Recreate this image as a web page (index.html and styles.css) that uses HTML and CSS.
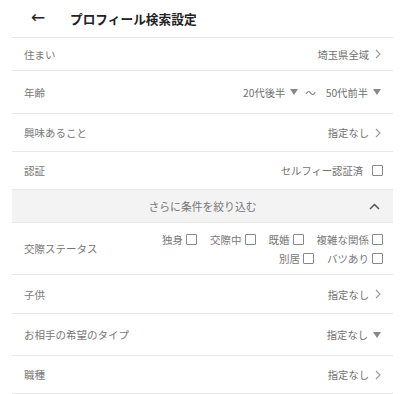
FILE: index.html
```html
<!DOCTYPE html>
<html lang="ja">
<head>
  <meta charset="UTF-8" />
  <meta name="viewport" content="width=device-width, initial-scale=1.0"/>
  <title>プロフィール検索設定</title>
  <link rel="stylesheet" href="styles.css">
</head>
<body>
  <div class="header">
    <span class="back">&#x2190;</span>
    <h1>プロフィール検索設定</h1>
  </div>

  <div class="list">
    <div class="row row-short">
      <span class="label">住まい</span>
      <span class="value">埼玉県全域
        <svg class="chev" width="6" height="10" viewBox="0 0 6 10"><polyline points="1,1 5,5 1,9" /></svg>
      </span>
    </div>

    <div class="row row-tall">
      <span class="label">年齢</span>
      <span class="value">
        20代後半 <span class="tri"></span>
        <span class="tilde">〜</span>
        50代前半 <span class="tri"></span>
      </span>
    </div>

    <div class="row">
      <span class="label">興味あること</span>
      <span class="value">指定なし
        <svg class="chev" width="6" height="10" viewBox="0 0 6 10"><polyline points="1,1 5,5 1,9" /></svg>
      </span>
    </div>

    <div class="row">
      <span class="label">認証</span>
      <span class="value">セルフィー認証済 <span class="check check-wide"></span></span>
    </div>

    <div class="more">
      <span>さらに条件を絞り込む</span>
      <svg class="up" width="11" height="7" viewBox="0 0 11 7"><polyline points="1,6 5.5,1.5 10,6" /></svg>
    </div>

    <div class="row row-status">
      <span class="label">交際ステータス</span>
      <div class="options">
        <div class="opt-line">
          <span class="opt">独身<span class="check"></span></span>
          <span class="opt">交際中<span class="check"></span></span>
          <span class="opt">既婚<span class="check"></span></span>
          <span class="opt">複雑な関係<span class="check"></span></span>
        </div>
        <div class="opt-line">
          <span class="opt">別居<span class="check"></span></span>
          <span class="opt">バツあり<span class="check"></span></span>
        </div>
      </div>
    </div>

    <div class="row row-child">
      <span class="label">子供</span>
      <span class="value">指定なし
        <svg class="chev" width="6" height="10" viewBox="0 0 6 10"><polyline points="1,1 5,5 1,9" /></svg>
      </span>
    </div>

    <div class="row row-select">
      <span class="label">お相手の希望のタイプ</span>
      <span class="value">指定なし <span class="tri"></span></span>
    </div>

    <div class="row">
      <span class="label">職種</span>
      <span class="value">指定なし
        <svg class="chev" width="6" height="10" viewBox="0 0 6 10"><polyline points="1,1 5,5 1,9" /></svg>
      </span>
    </div>
  </div>
</body>
</html>
```

FILE: styles.css
```css
body {
  margin: 0;
  font-family: "Noto Sans CJK JP", "Noto Sans", sans-serif;
  background-color: #fff;
  color: #777;
  font-size: 10.5px;
}
.header {
  height: 37px;
  display: flex;
  align-items: center;
  padding-left: 31px;
}
.back {
  font-family: "DejaVu Sans", sans-serif;
  font-size: 17px;
  color: #222;
  width: 39px;
  line-height: 1;
  margin-top: -3px;
}
h1 {
  margin: 0;
  font-size: 12.7px;
  font-weight: bold;
  color: #222;
}
.list {
  margin: 0 7px 0 12px;
  border-top: 1px solid #e8e8e8;
}
.row {
  height: 37px;
  display: flex;
  justify-content: space-between;
  align-items: center;
  padding: 0 12px;
  border-bottom: 1px solid #e8e8e8;
}
.row-short {
  height: 32px;
}
.row-tall {
  height: 42px;
}
.row-child {
  height: 38px;
}
.row-select {
  height: 41px;
}
.row-status {
  height: 51px;
  padding-right: 10px;
}
.label {
  color: #777;
}
.value {
  display: flex;
  align-items: center;
  color: #707070;
  font-size: 10.3px;
}
.chev {
  margin-left: 6px;
  fill: none;
  stroke: #999;
  stroke-width: 1.1;
}
.tri {
  width: 0;
  height: 0;
  border-left: 4px solid transparent;
  border-right: 4px solid transparent;
  border-top: 6px solid #888;
  margin: 0 0 0 5px;
}
.tilde {
  margin: 0 10px 0 7px;
}
.check {
  display: inline-block;
  width: 9px;
  height: 9px;
  border: 1px solid #888;
  border-radius: 1px;
  margin-left: 3px;
  background: #fff;
}
.check-wide {
  margin-left: 9px;
  margin-right: -2px;
}
.more {
  height: 32px;
  background-color: #f3f3f3;
  border-bottom: 1px solid #e8e8e8;
  display: flex;
  align-items: center;
  justify-content: center;
  position: relative;
  color: #777;
  font-size: 10.8px;
}
.up {
  position: absolute;
  right: 13px;
  top: 13px;
  fill: none;
  stroke: #555;
  stroke-width: 1.5;
}
.options {
  display: flex;
  flex-direction: column;
  gap: 4px;
}
.opt-line {
  display: flex;
  justify-content: flex-end;
  gap: 13px;
}
.opt {
  display: flex;
  align-items: center;
}
```
